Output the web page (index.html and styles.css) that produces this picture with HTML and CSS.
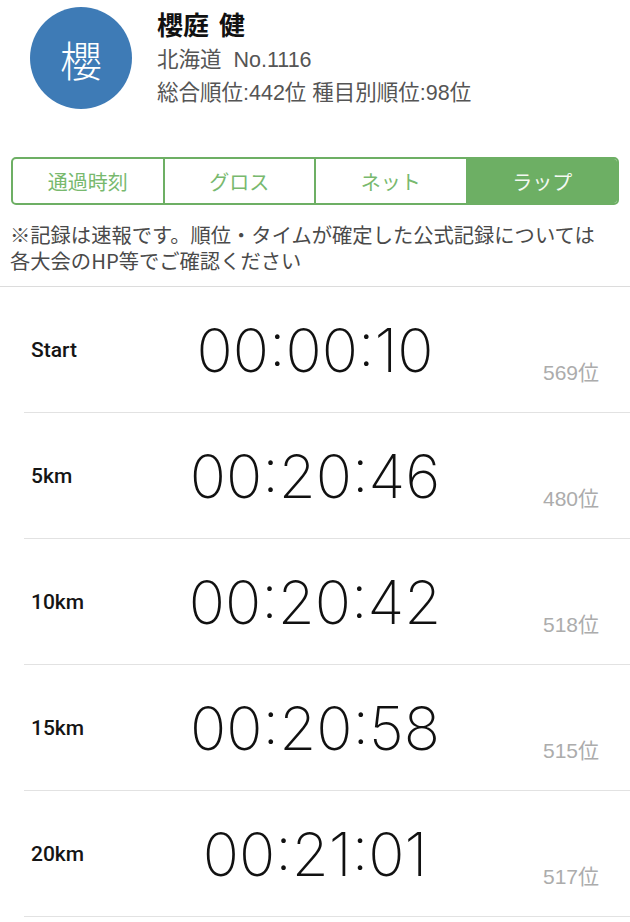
FILE: index.html
```html
<!DOCTYPE html>
<html lang="ja">
<head>
<meta charset="utf-8">
<title>記録</title>
<link rel="stylesheet" href="styles.css">
</head>
<body>
<header class="profile">
  <div class="avatar">櫻</div>
  <div class="info">
    <div class="name">櫻庭 健</div>
    <div class="meta">北海道&nbsp;&nbsp;No.1116</div>
    <div class="meta">総合順位:442位 種目別順位:98位</div>
  </div>
</header>
<nav class="tabs">
  <div class="tab">通過時刻</div>
  <div class="tab">グロス</div>
  <div class="tab">ネット</div>
  <div class="tab active">ラップ</div>
</nav>
<p class="note">※記録は速報です。順位・タイムが確定した公式記録については各大会のHP等でご確認ください</p>
<ul class="splits">
  <li class="split"><span class="label">Start</span><span class="time">00:00:10</span><span class="rank">569位</span></li>
  <li class="split"><span class="label">5km</span><span class="time">00:20:46</span><span class="rank">480位</span></li>
  <li class="split"><span class="label">10km</span><span class="time">00:20:42</span><span class="rank">518位</span></li>
  <li class="split"><span class="label">15km</span><span class="time">00:20:58</span><span class="rank">515位</span></li>
  <li class="split"><span class="label">20km</span><span class="time">00:21:01</span><span class="rank">517位</span></li>
</ul>
</body>
</html>
```
FILE: styles.css
```css
* { box-sizing: border-box; }
html, body { margin: 0; padding: 0; background: #fff; }
body {
  font-family: "Liberation Sans", "Noto Sans CJK JP", sans-serif;
  color: #111;
  width: 630px;
  overflow: hidden;
}
.profile {
  display: flex;
  align-items: flex-start;
  padding: 7px 0 0 30px;
  gap: 25px;
}
.avatar {
  width: 102px;
  height: 102px;
  border-radius: 50%;
  background: #3e7bb6;
  color: #fff;
  display: flex;
  align-items: center;
  justify-content: center;
  font-family: "Noto Sans CJK JP", sans-serif;
  font-size: 42px;
  font-weight: 300;
  flex: none;
}
.name {
  font-family: "Noto Sans CJK JP", sans-serif;
  font-weight: 700;
  font-size: 26px;
  line-height: 34px;
  word-spacing: 4px;
}
.meta {
  font-size: 21.5px;
  line-height: 34px;
  color: #555;
}
.meta + .meta { margin-top: -1px; }
.name + .meta { margin-top: 2px; }
.tabs {
  display: flex;
  margin: 47px 11px 0;
  height: 48px;
  border: 2px solid #6daf64;
  border-radius: 5px;
  overflow: hidden;
}
.tab {
  flex: 1;
  display: flex;
  align-items: center;
  justify-content: center;
  font-family: "Noto Sans CJK JP", sans-serif;
  font-size: 20px;
  color: #78b96e;
  border-left: 2px solid #6daf64;
}
.tab:first-child { border-left: none; }
.tab.active { background: #6daf64; color: #f4f9f2; }
.note {
  margin: 0;
  padding: 16px 25px 13px 10px;
  font-family: "Noto Sans CJK JP", sans-serif;
  font-size: 20.3px;
  line-height: 26px;
  color: #4a4a4a;
  border-bottom: 1px solid #dcdcdc;
}
.splits { list-style: none; margin: 0; padding: 0; }
.split {
  margin-left: 24px;
  padding: 0 31px 0 7px;
  height: 126px;
  border-bottom: 1px solid #e2e2e2;
  display: grid;
  grid-template-columns: 1fr auto 1fr;
  align-items: center;
}
.label {
  font-family: Roboto, "Liberation Sans", sans-serif;
  font-weight: 500;
  font-size: 21px;
  color: #151515;
}
.time {
  font-family: Inter, Roboto, sans-serif;
  font-weight: 150;
  font-size: 60px;
  line-height: 1;
  color: #111;
}
.rank {
  justify-self: end;
  align-self: end;
  margin-bottom: 27px;
  font-size: 21px;
  line-height: 24px;
  color: #acacac;
}
```
